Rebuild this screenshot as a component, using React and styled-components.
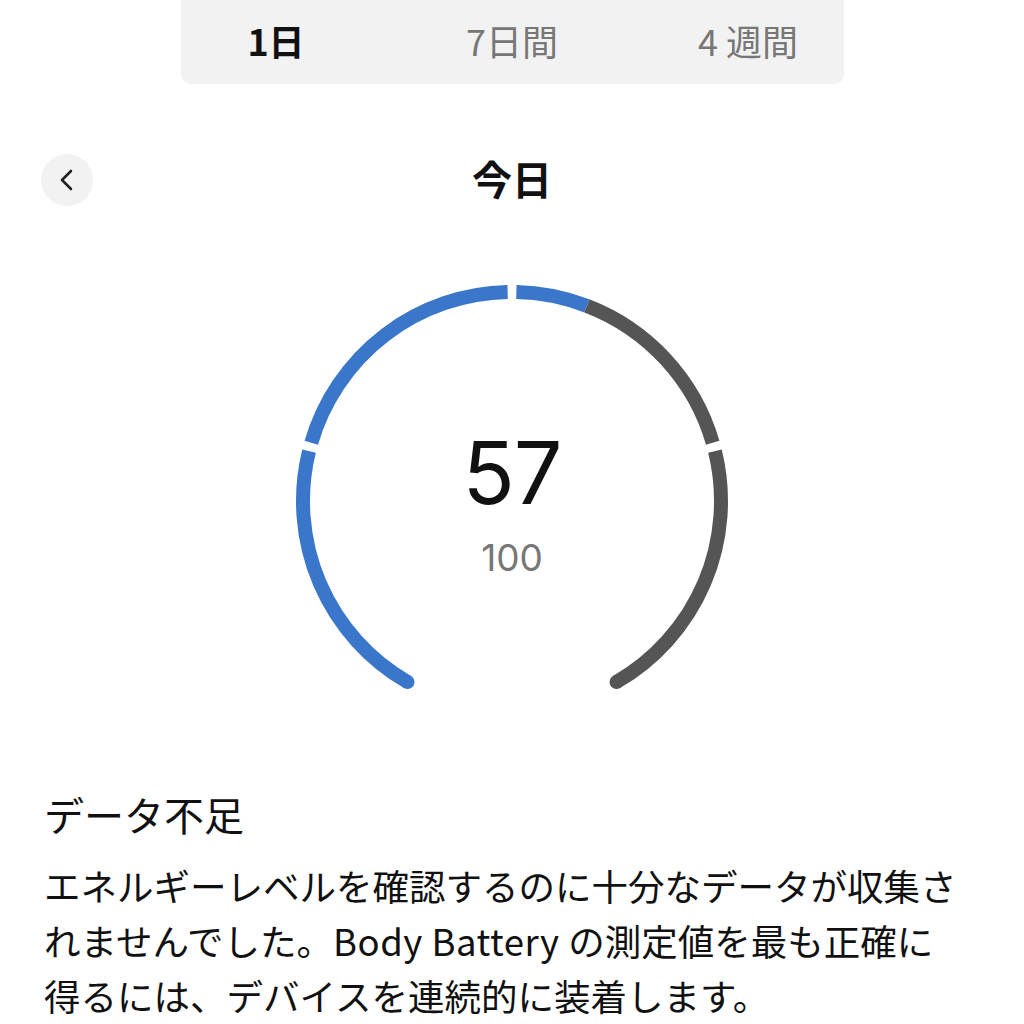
import React from "react";
import styled, { createGlobalStyle } from "styled-components";

const GlobalStyle = createGlobalStyle`
  body {
    margin: 0;
    background: #fff;
    font-family: "Noto Sans CJK JP", "Noto Sans", sans-serif;
    color: #111;
  }
`;

const Page = styled.div`
  width: 1024px;
  display: flex;
  flex-direction: column;
`;

const SegmentBar = styled.div`
  width: 663px;
  height: 84px;
  margin: 0 auto;
  background: #f2f2f2;
  border-radius: 0 0 10px 10px;
  display: grid;
  grid-template-columns: repeat(3, 236px);
  justify-content: center;
  align-items: center;
`;

const SegmentItem = styled.div`
  text-align: center;
  font-size: 36px;
  line-height: 1;
  font-weight: ${(p) => (p.$active ? 700 : 400)};
  color: ${(p) => (p.$active ? "#111" : "#777")};
  margin-top: -5px;
`;

const Header = styled.div`
  margin-top: 70px;
  height: 52px;
  padding: 0 41px;
  display: grid;
  grid-template-columns: 1fr auto 1fr;
  align-items: center;
`;

const BackButton = styled.button`
  width: 52px;
  height: 52px;
  border: none;
  border-radius: 50%;
  background: #f2f2f2;
  padding: 0;
  display: flex;
  align-items: center;
  justify-content: center;
  cursor: pointer;
`;

const Title = styled.div`
  font-size: 40px;
  font-weight: 700;
  line-height: 1;
  color: #111;
  margin-top: -5px;
`;

const GaugeWrap = styled.div`
  position: relative;
  width: 440px;
  height: 430px;
  margin: 64px auto 0;
`;

const GaugeCenter = styled.div`
  position: absolute;
  left: 0;
  right: 0;
  top: 160px;
  display: flex;
  flex-direction: column;
  align-items: center;
`;

const Value = styled.div`
  font-family: Inter, "Noto Sans", sans-serif;
  font-size: 86px;
  line-height: 1;
  color: #111;
  letter-spacing: -1px;
`;

const Max = styled.div`
  font-family: Inter, "Noto Sans", sans-serif;
  font-size: 37px;
  line-height: 1;
  margin-top: 23px;
  color: #777;
`;

const Info = styled.div`
  padding: 0 44px;
  margin-top: 94px;
`;

const InfoTitle = styled.div`
  font-size: 40px;
  line-height: 1;
  color: #111;
`;

const InfoBody = styled.p`
  margin: 24px 0 0;
  font-size: 36.5px;
  line-height: 55px;
  color: #111;
  white-space: nowrap;
`;

const Latin = styled.span`
  letter-spacing: 0.5px;
`;

const CX = 220;
const CY = 231;
const R = 209;

const pt = (deg) => {
  const a = (deg * Math.PI) / 180;
  return [CX + R * Math.sin(a), CY - R * Math.cos(a)];
};

const arc = (a1, a2) => {
  const [x1, y1] = pt(a1);
  const [x2, y2] = pt(a2);
  const large = a2 - a1 > 180 ? 1 : 0;
  return `M ${x1} ${y1} A ${R} ${R} 0 ${large} 1 ${x2} ${y2}`;
};

const BLUE = "#3a77cb";
const GRAY = "#555555";

const Gauge = ({ value, max }) => {
  const split = -150 + (value / max) * 300;
  const segs = [
    [-150, -76.2],
    [-73.8, -1.2],
    [1.2, 73.8],
    [76.2, 150],
  ];
  const parts = [];
  segs.forEach(([a, b], i) => {
    if (b <= split) parts.push({ a, b, c: BLUE, k: `${i}b` });
    else if (a >= split) parts.push({ a, b, c: GRAY, k: `${i}g` });
    else {
      parts.push({ a, b: split, c: BLUE, k: `${i}b` });
      parts.push({ a: split, b, c: GRAY, k: `${i}g` });
    }
  });
  const [sx, sy] = pt(-150);
  const [ex, ey] = pt(150);
  return (
    <svg width="440" height="430" viewBox="0 0 440 430">
      {parts.map((p) => (
        <path key={p.k} d={arc(p.a, p.b)} fill="none" stroke={p.c} strokeWidth="14" />
      ))}
      <circle cx={sx} cy={sy} r="7" fill={BLUE} />
      <circle cx={ex} cy={ey} r="7" fill={GRAY} />
    </svg>
  );
};

const App = () => {
  return (
    <Page>
      <GlobalStyle />
      <SegmentBar>
        <SegmentItem $active>1日</SegmentItem>
        <SegmentItem>7日間</SegmentItem>
        <SegmentItem>4 週間</SegmentItem>
      </SegmentBar>
      <Header>
        <BackButton type="button">
          <svg width="52" height="52" viewBox="0 0 52 52">
            <polyline points="30,17 21,26 30,35" fill="none" stroke="#222" strokeWidth="2.6" strokeLinecap="round" strokeLinejoin="round" />
          </svg>
        </BackButton>
        <Title>今日</Title>
        <div />
      </Header>
      <GaugeWrap>
        <Gauge value={57} max={100} />
        <GaugeCenter>
          <Value>57</Value>
          <Max>100</Max>
        </GaugeCenter>
      </GaugeWrap>
      <Info>
        <InfoTitle>データ不足</InfoTitle>
        <InfoBody>
          エネルギーレベルを確認するのに十分なデータが収集さ
          <br />
          れませんでした。<Latin>Body Battery </Latin>の測定値を最も正確に
          <br />
          得るには、デバイスを連続的に装着します。
        </InfoBody>
      </Info>
    </Page>
  );
};

export default App;
